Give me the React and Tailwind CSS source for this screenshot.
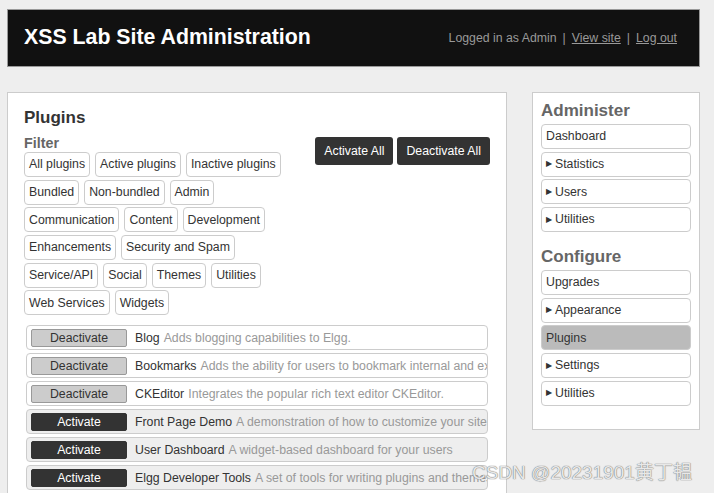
const filters = [
  'All plugins', 'Active plugins', 'Inactive plugins', 'Bundled', 'Non-bundled', 'Admin',
  'Communication', 'Content', 'Development', 'Enhancements', 'Security and Spam',
  'Service/API', 'Social', 'Themes', 'Utilities', 'Web Services', 'Widgets',
];

const plugins = [
  { name: 'Blog', desc: 'Adds blogging capabilities to Elgg.', active: true },
  { name: 'Bookmarks', desc: 'Adds the ability for users to bookmark internal and external sites.', active: true },
  { name: 'CKEditor', desc: 'Integrates the popular rich text editor CKEditor.', active: true },
  { name: 'Front Page Demo', desc: "A demonstration of how to customize your site's front page.", active: false },
  { name: 'User Dashboard', desc: 'A widget-based dashboard for your users', active: false },
  { name: 'Elgg Developer Tools', desc: 'A set of tools for writing plugins and themes', active: false },
  { name: 'Diagnostics', desc: 'Elgg diagnostics tool', active: false },
];

const administer = [
  { label: 'Dashboard' },
  { label: 'Statistics', menu: true },
  { label: 'Users', menu: true },
  { label: 'Utilities', menu: true },
];

const configure = [
  { label: 'Upgrades' },
  { label: 'Appearance', menu: true },
  { label: 'Plugins', selected: true },
  { label: 'Settings', menu: true },
  { label: 'Utilities', menu: true },
];

const SideItem = ({ item }) => (
  <li
    className={`h-[25px] mb-[2.7px] flex items-center px-[4px] border border-[#ccc] rounded-[4px] text-[12.3px] text-[#333] ${
      item.selected ? 'bg-[#bbb]' : 'bg-white'
    }`}
  >
    {item.menu && <span className="text-[8px] mr-[3px] leading-none">&#9654;</span>}
    <span>{item.label}</span>
  </li>
);

export default function App() {
  return (
    <div
      className="relative min-h-[493px] h-[493px] overflow-hidden bg-[#eee] pt-[9px] px-[7px]"
      style={{ fontFamily: '"Liberation Sans", Arial, sans-serif' }}
    >
      {/* Header */}
      <div className="w-[693px] h-[58px] bg-[#111] border border-[#999] flex items-center justify-between pl-[16px] pr-[22px]">
        <h1 className="text-[21.3px] font-bold text-white">XSS Lab Site Administration</h1>
        <div className="text-[12.3px] text-[#999] flex items-center gap-[6px]">
          <span>Logged in as Admin</span>
          <span>|</span>
          <a className="underline">View site</a>
          <span>|</span>
          <a className="underline">Log out</a>
        </div>
      </div>

      <div className="flex gap-[25px] mt-[25px] items-start">
        {/* Main */}
        <div className="w-[500px] h-[420px] bg-white border border-[#ccc] px-[16px] pt-[14px]">
          <h2 className="text-[17px] font-bold text-[#333] leading-[22px]">Plugins</h2>
          <div className="flex justify-between">
            <div className="w-[285px]">
              <h3 className="text-[14.3px] font-bold text-[#666] leading-[17px] mt-[6px]">Filter</h3>
              <div className="flex flex-wrap gap-x-[5px] gap-y-[2.7px]">
                {filters.map((f) => (
                  <span
                    key={f}
                    className="h-[25px] flex items-center px-[4px] border border-[#ccc] rounded-[4px] text-[12.3px] text-[#333]"
                  >
                    {f}
                  </span>
                ))}
              </div>
            </div>
            <div className="flex gap-[4px] mt-[8px] h-[28px]">
              <button className="h-[28px] px-[9px] bg-[#333] text-white text-[12.3px] rounded-[3px]">Activate All</button>
              <button className="h-[28px] px-[9px] bg-[#333] text-white text-[12.3px] rounded-[3px]">Deactivate All</button>
            </div>
          </div>

          <ul className="mt-[10px] mx-[2px]">
            {plugins.map((p) => (
              <li
                key={p.name}
                className={`h-[25px] mb-[3px] flex items-center pl-[4px] pr-[4px] border border-[#ccc] rounded-[4px] overflow-hidden whitespace-nowrap text-[12.3px] ${
                  p.active ? 'bg-white' : 'bg-[#eee]'
                }`}
              >
                <span
                  className={`shrink-0 w-[96px] h-[18px] flex items-center justify-center rounded-[2px] border text-[12.3px] ${
                    p.active ? 'bg-[#ccc] border-[#999] text-[#333]' : 'bg-[#333] border-[#333] text-white'
                  }`}
                >
                  {p.active ? 'Deactivate' : 'Activate'}
                </span>
                <span className="ml-[8px] text-[#333]">{p.name}</span>
                <span className="ml-[4px] text-[#999]">{p.desc}</span>
              </li>
            ))}
          </ul>
        </div>

        {/* Sidebar */}
        <div className="w-[168px] h-[338px] bg-white border border-[#ccc] px-[8px] pt-[7px]">
          <h2 className="text-[17px] font-bold text-[#666] leading-[22px] mb-[2px]">Administer</h2>
          <ul>
            {administer.map((i) => (
              <SideItem key={i.label} item={i} />
            ))}
          </ul>
          <h2 className="text-[17px] font-bold text-[#666] leading-[22px] mt-[14px] mb-[2px]">Configure</h2>
          <ul>
            {configure.map((i) => (
              <SideItem key={i.label} item={i} />
            ))}
          </ul>
        </div>
      </div>

      {/* Watermark */}
      <div
        className="absolute left-[472px] top-[459px] text-[19px] text-[#e8e8e8] whitespace-nowrap"
        style={{
          fontFamily: '"Liberation Sans", Arial, "Noto Sans CJK SC", sans-serif',
          textShadow: '0 0 1px #777, 0 0 1px #777',
        }}
      >
        CSDN @20231901黄丁韫
      </div>
    </div>
  );
}
